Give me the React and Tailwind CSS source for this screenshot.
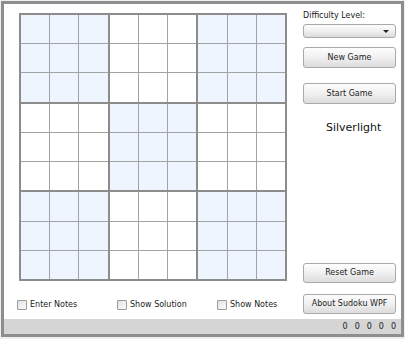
import React from "react";

const BOXES = [0, 1, 2, 3, 4, 5, 6, 7, 8];
const CELLS = [0, 1, 2, 3, 4, 5, 6, 7, 8];
const shaded = (b) => b % 2 === 0;

const btn =
  "w-full rounded-[3px] border border-[#a9a9a9] bg-linear-to-b from-[#fdfdfd] via-[#f0f0f0] to-[#dcdcdc] text-[8px] leading-none text-[#222] flex items-center justify-center";

function Check({ label }) {
  return (
    <label className="w-[100px] shrink-0 flex items-center gap-[3px] text-[8px] text-[#222]">
      <span className="w-[10px] h-[10px] rounded-[1px] border border-[#9a9a9a] bg-linear-to-br from-[#e4e4e4] to-[#fbfbfb]" />
      {label}
    </label>
  );
}

export default function App() {
  return (
    <div className="w-[405px] h-[339px] bg-[#efefef] pl-[1px] pt-[1px]" style={{ fontFamily: "'DejaVu Sans', Verdana, sans-serif" }}>
      <div className="w-[403px] h-[336px] border-[3px] border-[#8e8e8e] bg-white flex flex-col">
        <div className="h-[315px] flex pl-[13px]">
          <div className="w-[270px] shrink-0 flex flex-col">
            <div className="mt-[9px] ml-[2px] w-[268px] h-[268px] bg-[#8c8c8c] p-[2px] grid grid-cols-3 grid-rows-3 gap-[2px]">
              {BOXES.map((b) => (
                <div key={b} className="bg-[#a3a3a3] grid grid-cols-3 grid-rows-3 gap-px">
                  {CELLS.map((c) => (
                    <div key={c} className={shaded(b) ? "bg-[#eef5fe]" : "bg-white"} />
                  ))}
                </div>
              ))}
            </div>
            <div className="mt-[18px] flex">
              <Check label="Enter Notes" />
              <Check label="Show Solution" />
              <Check label="Show Notes" />
            </div>
          </div>

          <div className="ml-[16px] w-[93px] shrink-0 flex flex-col pt-[7px] pb-[5px]">
            <div className="h-[10px] leading-[10px] text-[8px] text-[#222]">Difficulty Level:</div>
            <div className="mt-[3px] h-[14px] rounded-[3px] border border-[#a9a9a9] bg-linear-to-b from-[#fdfdfd] via-[#f0f0f0] to-[#dcdcdc] flex items-center justify-end pr-[6px]">
              <span className="w-0 h-0 border-l-[3px] border-r-[3px] border-t-[3px] border-l-transparent border-r-transparent border-t-[#222]" />
            </div>
            <button className={`${btn} mt-[9px] h-[21px]`}>New Game</button>
            <button className={`${btn} mt-[15px] h-[21px]`}>Start Game</button>
            <div className="mt-[16px] pl-[23px] text-[11px] leading-[16px] text-[#111]">Silverlight</div>
            <button className={`${btn} mt-auto h-[20px]`}>Reset Game</button>
            <button className={`${btn} mt-[11px] h-[20px]`}>About Sudoku WPF</button>
          </div>
        </div>
        <div className="flex-1 bg-[#d5d5d5] flex items-center justify-end gap-[7px] pr-[5px] text-[8px] text-[#222]">
          <span>0</span>
          <span>0</span>
          <span>0</span>
          <span>0</span>
          <span>0</span>
        </div>
      </div>
    </div>
  );
}
